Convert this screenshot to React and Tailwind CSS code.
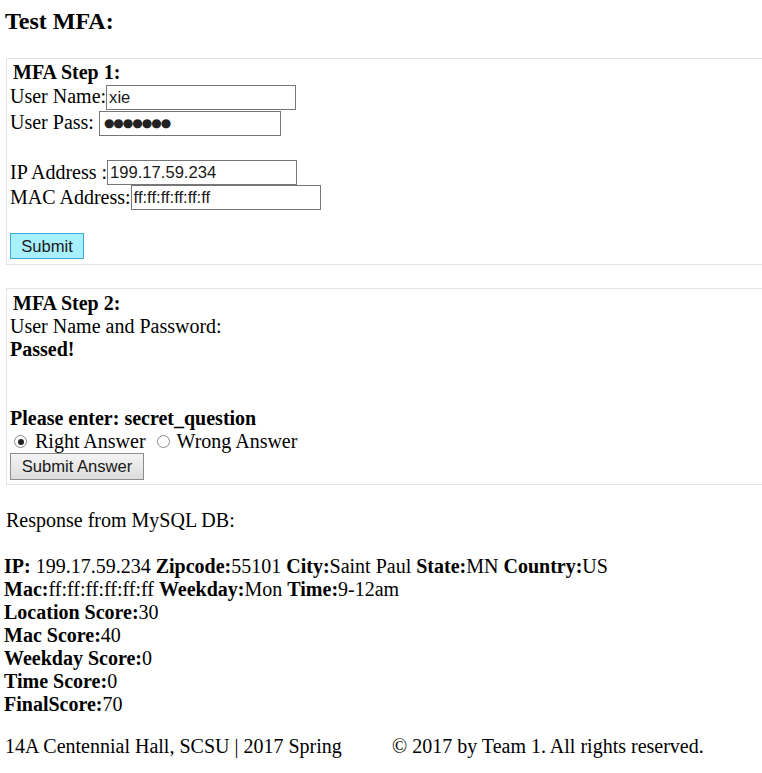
import React from 'react';

const serif = { fontFamily: '"Liberation Serif", "Times New Roman", serif' };

const Field = ({ value, className = '' }) => (
  <input
    readOnly
    value={value}
    className={`h-[25px] border border-[#767676] bg-white px-[2px] text-[16.6px] text-[#1a1a1a] outline-none align-middle font-['Liberation_Sans',Arial,sans-serif] ${className}`}
  />
);

const Radio = ({ checked }) => (
  <span className="inline-flex h-[13px] w-[13px] shrink-0 items-center justify-center rounded-full border border-[#8a8a8a] bg-white">
    {checked && <span className="h-[6px] w-[6px] rounded-full bg-[#222]" />}
  </span>
);

const Row = ({ label, children, className = 'h-[25px]' }) => (
  <div className={`flex items-center ${className}`}>
    <span>{label}</span>
    {children}
  </div>
);

const Stat = ({ name, value }) => (
  <>
    <b>{name}</b>
    {value}
  </>
);

export default function App() {
  return (
    <div className="w-[762px] overflow-hidden bg-white text-[20px] leading-[23px] text-black" style={serif}>
      <h3 className="pl-[5px] pt-[8px] text-[24px] font-bold leading-[27px]">Test MFA:</h3>

      {/* step 1 */}
      <div className="ml-[6px] mt-[23px] w-[780px] border border-[#e3e3e3] pb-[5px] pl-[3px] pt-[2px]">
        <div className="pl-[3px] font-bold">MFA Step 1:</div>
        <div className="mt-[1px]">
          <Row label="User Name:" className="h-[26px] items-start">
            <Field value="xie" className="w-[190px]" />
          </Row>
          <Row label={'User Pass:\u00a0'} className="h-[26px] items-start">
            <div className="flex h-[25px] w-[182px] items-center border border-[#767676] pl-[4px] text-[12px] tracking-[-1px] text-[#222] font-['DejaVu_Sans',sans-serif]">
              ●●●●●●●
            </div>
          </Row>
        </div>
        <div className="h-[23px]" />
        <Row label="IP Address :">
          <Field value="199.17.59.234" className="w-[190px]" />
        </Row>
        <Row label="MAC Address:">
          <Field value="ff:ff:ff:ff:ff:ff" className="w-[190px]" />
        </Row>
        <div className="h-[23px]" />
        <button className="block h-[26px] w-[74px] border border-[#3ca8d6] bg-[#a9f0ff] text-[16.6px] text-[#1a1a1a] font-['Liberation_Sans',Arial,sans-serif]">
          Submit
        </button>
      </div>

      {/* step 2 */}
      <div className="ml-[6px] mt-[23px] w-[780px] border border-[#e3e3e3] pb-[4px] pl-[3px] pt-[3px]">
        <div className="pl-[3px] font-bold">MFA Step 2:</div>
        <div>User Name and Password:</div>
        <div className="font-bold">Passed!</div>
        <div className="h-[46px]" />
        <div className="font-bold">Please enter: secret_question</div>
        <div className="flex h-[23px] items-center pl-[4px]">
          <Radio checked />
          <span className="ml-[8px]">Right Answer</span>
          <span className="ml-[11px]" />
          <Radio />
          <span className="ml-[7px]">Wrong Answer</span>
        </div>
        <button className="block h-[27px] w-[134px] border border-[#8c8c8c] bg-gradient-to-b from-[#f4f4f4] to-[#dcdcdc] text-[16.6px] text-[#1a1a1a] font-['Liberation_Sans',Arial,sans-serif]">
          Submit Answer
        </button>
      </div>

      {/* response */}
      <div className="mt-[24px] pl-[6px]">Response from MySQL DB:</div>
      <div className="h-[23px]" />
      <div className="pl-[4px]">
        <div>
          <Stat name="IP:" value=" 199.17.59.234 " />
          <Stat name="Zipcode:" value="55101 " />
          <Stat name="City:" value="Saint Paul " />
          <Stat name="State:" value="MN " />
          <Stat name="Country:" value="US" />
        </div>
        <div>
          <Stat name="Mac:" value="ff:ff:ff:ff:ff:ff " />
          <Stat name="Weekday:" value="Mon " />
          <Stat name="Time:" value="9-12am" />
        </div>
        <div><Stat name="Location Score:" value="30" /></div>
        <div><Stat name="Mac Score:" value="40" /></div>
        <div><Stat name="Weekday Score:" value="0" /></div>
        <div><Stat name="Time Score:" value="0" /></div>
        <div><Stat name="FinalScore:" value="70" /></div>
      </div>

      {/* footer */}
      <div className="mt-[19px] flex pb-[15px] pl-[5px]">
        <span className="w-[387px]">14A Centennial Hall, SCSU | 2017 Spring</span>
        <span>© 2017 by Team 1. All rights reserved.</span>
      </div>
    </div>
  );
}
